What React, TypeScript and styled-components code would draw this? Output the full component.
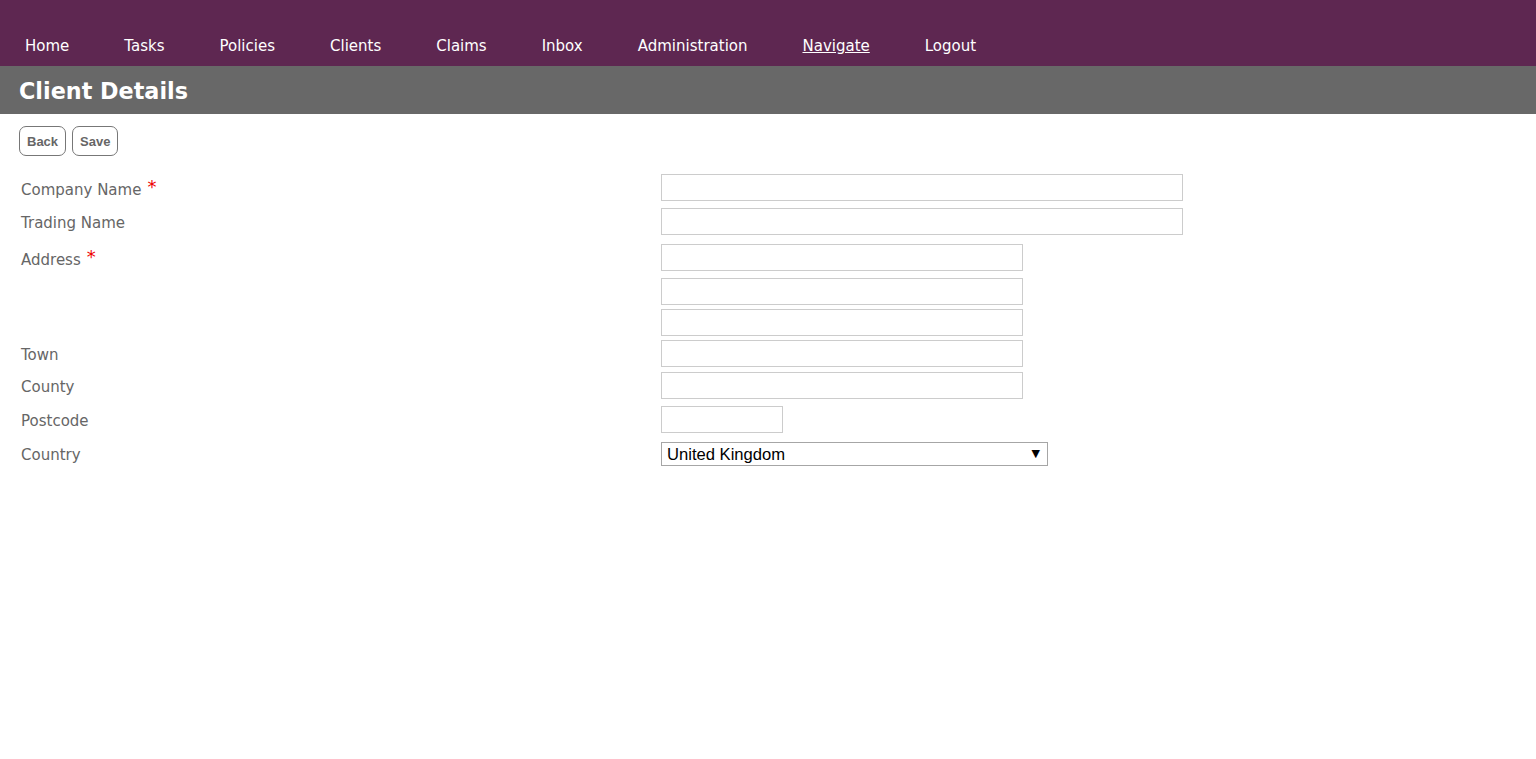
import React from "react";
import styled, { createGlobalStyle } from "styled-components";

const Global = createGlobalStyle`
  html, body { margin: 0; padding: 0; background: #fff; }
  body { font-family: "DejaVu Sans", Verdana, sans-serif; }
  * { box-sizing: border-box; }
`;

const NavBar = styled.nav`
  background: #5e2751;
  height: 66px;
  display: flex;
  align-items: flex-start;
  padding: 37px 0 0 25px;
  gap: 55px;
`;

const NavLink = styled.a<{ $underline?: boolean }>`
  color: #fff;
  font-size: 15px;
  line-height: 18px;
  text-decoration: ${(p) => (p.$underline ? "underline" : "none")};
  cursor: pointer;
`;

const TitleBar = styled.header`
  background: #686868;
  height: 48px;
  display: flex;
  align-items: center;
  padding: 3px 0 0 19px;
`;

const Title = styled.h1`
  margin: 0;
  color: #fff;
  font-size: 22.3px;
  font-weight: bold;
  line-height: 1;
`;

const Toolbar = styled.div`
  display: flex;
  gap: 6px;
  padding: 12px 0 0 19px;
`;

const Button = styled.button`
  height: 30px;
  padding: 0 7px;
  border: 1px solid #777;
  border-radius: 7px;
  background: #fff;
  color: #666;
  font-family: "Liberation Sans", Arial, sans-serif;
  font-weight: bold;
  font-size: 13px;
`;

const Form = styled.div`
  padding: 18px 0 0 21px;
  display: flex;
  flex-direction: column;
`;

const Row = styled.div<{ $top: number }>`
  display: flex;
  align-items: flex-start;
  margin-top: ${(p) => p.$top}px;
`;

const Label = styled.label<{ $lh?: number; $shift?: number }>`
  width: 640px;
  flex: none;
  color: #666;
  font-size: 15px;
  line-height: ${(p) => p.$lh ?? 27}px;
  height: ${(p) => p.$lh ?? 27}px;
  padding-top: ${(p) => p.$shift ?? 2}px;
`;

const Star = styled.span`
  color: #e00;
  margin-left: 6px;
  font-size: 18px;
  line-height: 0;
  position: relative;
  top: -2px;
`;

const Input = styled.input<{ $w: number }>`
  width: ${(p) => p.$w}px;
  height: 27px;
  border: 1px solid #ccc;
  padding: 0 4px;
  margin: 0;
  font-size: 14px;
  outline: none;
`;

const SelectWrap = styled.div`
  position: relative;
  width: 387px;
  height: 24px;
`;

const Select = styled.select`
  appearance: none;
  width: 100%;
  height: 24px;
  border: 1px solid #a6a6a6;
  background: #fff;
  color: #000;
  font-family: "Liberation Sans", Arial, sans-serif;
  font-size: 16.6px;
  padding: 0 0 0 5px;
  margin: 0;
  outline: none;
`;

const Arrow = styled.span`
  position: absolute;
  right: 8px;
  top: 5px;
  font-size: 11px;
  color: #000;
  pointer-events: none;
  font-family: "DejaVu Sans", sans-serif;
`;

const navItems = ["Home", "Tasks", "Policies", "Clients", "Claims", "Inbox", "Administration", "Navigate", "Logout"];

type Field = { label?: string; req?: boolean; w: number; top: number };

const fields: Field[] = [
  { label: "Company Name", req: true, w: 522, top: 0 },
  { label: "Trading Name", w: 522, top: 7 },
  { label: "Address", req: true, w: 362, top: 9 },
  { w: 362, top: 7 },
  { w: 362, top: 4 },
  { label: "Town", w: 362, top: 4 },
  { label: "County", w: 362, top: 5 },
  { label: "Postcode", w: 122, top: 7 },
];

export default function App() {
  return (
    <>
      <Global />
      <NavBar>
        {navItems.map((n) => (
          <NavLink key={n} $underline={n === "Navigate"}>
            {n}
          </NavLink>
        ))}
      </NavBar>
      <TitleBar>
        <Title>Client Details</Title>
      </TitleBar>
      <Toolbar>
        <Button>Back</Button>
        <Button>Save</Button>
      </Toolbar>
      <Form>
        {fields.map((f, i) => (
          <Row key={i} $top={f.top}>
            <Label $shift={f.req ? 3 : 2}>
              {f.label}
              {f.req && <Star>*</Star>}
            </Label>
            <Input $w={f.w} />
          </Row>
        ))}
        <Row $top={9}>
          <Label $lh={24} $shift={1}>Country</Label>
          <SelectWrap>
            <Select defaultValue="United Kingdom">
              <option>United Kingdom</option>
              <option>Ireland</option>
            </Select>
            <Arrow>▼</Arrow>
          </SelectWrap>
        </Row>
      </Form>
    </>
  );
}
